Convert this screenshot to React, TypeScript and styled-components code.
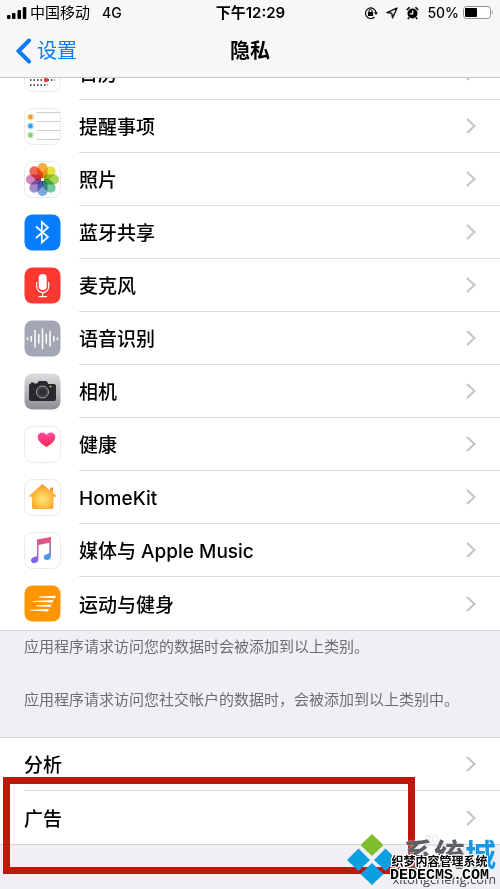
import React from "react";
import styled, { createGlobalStyle } from "styled-components";

const GlobalStyle = createGlobalStyle`
  * { box-sizing: border-box; }
  html, body, #root { height: 100%; }
  body {
    margin: 0;
    overflow: hidden;
    background: #efeff4;
    color: #000;
    font-family: Inter, "Noto Sans CJK SC", sans-serif;
  }
`;

const Screen = styled.div`
  position: relative;
  height: 100%;
  overflow: hidden;
  display: flex;
  flex-direction: column;
`;

const Header = styled.header`
  flex: none;
  background: #f7f7f7;
  border-bottom: 1px solid #c8c8ca;
`;

const StatusBar = styled.div`
  display: grid;
  grid-template-columns: 1fr auto 1fr;
  align-items: center;
  height: 25px;
  padding: 0 6px 0 7px;
  font-size: 15px;
  line-height: 20px;
`;

const StatusGroup = styled.div<{ $end?: boolean }>`
  display: flex;
  align-items: center;
  justify-content: ${(p) => (p.$end ? "flex-end" : "flex-start")};
  gap: ${(p) => (p.$end ? 8 : 3)}px;
`;

const Network = styled.span`
  margin-left: 9px;
  font-size: 14px;
  font-weight: 500;
`;

const Clock = styled.time`
  font-weight: 600;
`;

const Power = styled.span`
  display: flex;
  align-items: center;
  gap: 4px;
  font-size: 14px;
  font-weight: 500;
`;

const NavBar = styled.nav`
  display: grid;
  grid-template-columns: 1fr auto 1fr;
  align-items: center;
  height: 52px;
  padding: 0 16px;
`;

const BackLink = styled.a`
  display: flex;
  align-items: center;
  gap: 5px;
  color: #087cf8;
  font-size: 20px;
  line-height: 28px;
  text-decoration: none;
`;

const Title = styled.h1`
  margin: 0;
  font-size: 20px;
  line-height: 28px;
  font-weight: 700;
`;

const Content = styled.main`
  flex: 1;
  min-height: 0;
  overflow: hidden;
`;

const List = styled.ul<{ $scrolled?: boolean }>`
  list-style: none;
  margin: ${(p) => (p.$scrolled ? "-31px" : "0")} 0 0;
  padding: 0;
  background: #fff;
  border-top: ${(p) => (p.$scrolled ? "none" : "1px solid #d4d4d8")};
  border-bottom: 1px solid #d4d4d8;
`;

const Item = styled.li``;

const Row = styled.a`
  display: flex;
  padding-left: 24px;
  color: inherit;
  text-decoration: none;
`;

const IconSlot = styled.span`
  display: flex;
  align-items: center;
  width: 55px;
`;

const RowBody = styled.span`
  flex: 1;
  display: flex;
  align-items: center;
  justify-content: space-between;
  height: 53px;
  padding-right: 24px;
  border-bottom: 1px solid #dcdce0;
  ${Item}:last-child & {
    border-bottom: none;
  }
`;

const Label = styled.span`
  padding-top: 4px;
  font-size: 19px;
  line-height: 28px;
  font-weight: 500;
`;

const Notes = styled.section`
  padding: 4px 24px 25px;
  color: #6d6d72;
  font-size: 15px;
  line-height: 24px;
`;

const Note = styled.p`
  margin: 0 0 29px;
  white-space: nowrap;
  &:last-child { margin-bottom: 0; }
`;

const Highlight = styled.div`
  position: absolute;
  left: 3px;
  right: 85px;
  top: 777px;
  height: 97px;
  border: 7px solid #be170b;
  pointer-events: none;
`;

const Watermark = styled.div`
  position: absolute;
  right: 4px;
  top: 834px;
  display: flex;
  align-items: flex-start;
  pointer-events: none;
`;

const Brand = styled.div`
  display: grid;
  justify-items: end;
  margin-left: -5px;
`;

const BrandName = styled.span`
  grid-area: 1 / 1;
  padding-top: 2px;
  color: #5c5f63;
  font-size: 31px;
  line-height: 38px;
  font-weight: 700;
  text-shadow: 0 0 2px #fff;
`;

const BrandAccent = styled.span`
  color: #1597e5;
`;

const BrandUrl = styled.span`
  grid-area: 1 / 1;
  padding-top: 35px;
  color: #484848;
  font-family: "Open Sans", sans-serif;
  font-size: 13px;
  line-height: 20px;
  font-weight: 500;
`;

const Paw = styled.svg`
  position: absolute;
  right: 56px;
  top: 834px;
`;

const Stamp = styled.div`
  position: absolute;
  right: 11px;
  top: 855px;
  display: grid;
  justify-items: center;
  color: #000;
  font-weight: 700;
  text-shadow: 1px 0 #fff, -1px 0 #fff, 0 1px #fff, 0 -1px #fff, 1px 1px #fff, -1px -1px #fff, 1px -1px #fff, -1px 1px #fff;
  pointer-events: none;
`;

const StampName = styled.span`
  font-size: 12px;
  line-height: 14px;
`;

const StampUrl = styled.span`
  font-family: "Liberation Mono", monospace;
  font-size: 15px;
  line-height: 14px;
`;

function Tile({ fill = "#fff", children }: { fill?: string; children: React.ReactNode }) {
  return (
    <svg width="37" height="37" viewBox="0 0 37 37" aria-hidden="true">
      <defs>
        <linearGradient id="camera-bg" x1="0" y1="0" x2="0" y2="1">
          <stop offset="0" stopColor="#dedee0" />
          <stop offset="1" stopColor="#8c8d91" />
        </linearGradient>
      </defs>
      <rect x=".5" y=".5" width="36" height="36" rx="8" fill={fill} stroke={fill === "#fff" ? "#eaeaec" : "none"} />
      {children}
    </svg>
  );
}

const CalendarIcon = () => (
  <Tile>
    {[15, 20, 25, 30].map((y) => (
      <path key={y} d={`M6 ${y}H${y === 30 ? 24 : 31}`} stroke="#222" strokeWidth="1.3" strokeDasharray="1.5 2" />
    ))}
    <circle cx="22" cy="25" r="2.2" fill="#f2392f" />
  </Tile>
);

const RemindersIcon = () => (
  <Tile>
    {["#f59b23", "#2d9fee", "#7bd365"].map((c, i) => (
      <g key={c}>
        <circle cx="6.5" cy={9 + i * 9} r="3.6" fill={c} opacity=".3" />
        <circle cx="6.5" cy={9 + i * 9} r="2.2" fill={c} />
      </g>
    ))}
    <path d="M12.500 4.500H36M12.500 13.500H36M12.500 22.500H36M12.500 31.500H36" stroke="#cfcfd2" />
  </Tile>
);

const PhotosIcon = () => (
  <Tile>
    {["#f99d1c", "#e2dc1e", "#97cb3f", "#58bd8c", "#6797d8", "#8f78c0", "#cc6fb0", "#f04b3c"].map((c, i) => (
      <rect
        key={c}
        x="13.500"
        y="2"
        width="10"
        height="15.500"
        rx="5"
        fill={c}
        opacity=".85"
        style={{ mixBlendMode: "multiply" }}
        transform={`rotate(${i * 45} 18.500 18.500)`}
      />
    ))}
    <circle cx="18.500" cy="18.500" r="1.500" fill="#fff" />
  </Tile>
);

const BluetoothIcon = () => (
  <Tile fill="#087cff">
    <path d="M12 12.500L24 23L17.800 28.500V8L24 13.500L12 24" fill="none" stroke="#fff" strokeWidth="1.700" />
  </Tile>
);

const MicrophoneIcon = () => (
  <Tile fill="#fc3830">
    <rect x="14.700" y="7" width="8" height="16" rx="4" fill="#fff" />
    <path d="M12.700 15V19.500A6 6 0 0 0 24.700 19.500V15M18.700 25.500V29.500M14.500 29.700H23" fill="none" stroke="#fff" strokeWidth="1.200" />
  </Tile>
);

const SpeechIcon = () => (
  <Tile fill="#a2a7b3">
    <path
      d="M3.500 18V19.500M7.200 16.500V21M11 10.500V27M14.800 14.500V23M18.500 9V28.500M22.300 14.500V23M26 11.500V26M29.800 16.500V21M33.500 18V19.500"
      stroke="#fff"
      strokeWidth="1.500"
      strokeLinecap="round"
    />
  </Tile>
);

const CameraIcon = () => (
  <Tile fill="url(#camera-bg)">
    <path d="M7 10.500V9.500H10V10.500H13L15 8H22.500L24.500 11H30Q32 11 32 13V26Q32 28 30 28H7Q5 28 5 26V12.500Q5 10.500 7 10.500Z" fill="#28292c" />
    <circle cx="18.500" cy="19" r="6" fill="#303135" stroke="#aaaaac" strokeWidth="1" />
    <circle cx="18.500" cy="19" r="4.200" fill="none" stroke="#54555a" strokeWidth=".8" />
    <circle cx="26.500" cy="13.500" r="1" fill="#e6b629" />
  </Tile>
);

const HealthIcon = () => (
  <Tile>
    <defs>
      <linearGradient id="heart" x1="0" y1="0" x2="0" y2="1">
        <stop offset="0" stopColor="#ff4fa2" />
        <stop offset="1" stopColor="#fa2350" />
      </linearGradient>
    </defs>
    <path d="M22.500 21C17 17.500 13.700 14.500 13.700 11C13.700 8.200 15.800 6.500 18.200 6.500C20.200 6.500 21.700 7.500 22.500 9C23.300 7.500 24.800 6.500 26.800 6.500C29.200 6.500 31.300 8.200 31.300 11C31.300 14.500 28 17.500 22.500 21Z" fill="url(#heart)" />
  </Tile>
);

const HomeIcon = () => (
  <Tile>
    <defs>
      <radialGradient id="home" cx=".5" cy=".6" r=".6">
        <stop offset="0" stopColor="#ffe67a" />
        <stop offset=".6" stopColor="#fdb83c" />
        <stop offset="1" stopColor="#f38b1e" />
      </radialGradient>
    </defs>
    <path d="M18.500 5L26 11.500V8.500H29V14L32.500 17L31 18L29.500 17.500V28Q29.500 30 27.500 30H10Q8 30 8 28V17.500L6.500 18L5 17Z" fill="url(#home)" />
  </Tile>
);

const MusicIcon = () => (
  <Tile>
    <defs>
      <linearGradient id="music-a" x1="0" y1="0" x2="0" y2="1">
        <stop offset="0" stopColor="#ef4e72" />
        <stop offset=".5" stopColor="#b765bb" />
        <stop offset="1" stopColor="#7566f2" />
      </linearGradient>
      <linearGradient id="music-b" x1="0" y1="0" x2="0" y2="1">
        <stop offset="0" stopColor="#ef5371" />
        <stop offset=".6" stopColor="#8b79d2" />
        <stop offset="1" stopColor="#38a4ee" />
      </linearGradient>
    </defs>
    <path d="M13 7.500L27 5V10.500L14.500 13V26.500Q14.500 31 10 31Q7 31 7 28.200Q7 25.500 11 24.800Q13 24.500 13 23Z" fill="url(#music-a)" />
    <path d="M25.300 7L27 5V23.500Q27 28 22.700 28Q19.700 28 19.700 25.300Q19.700 22.700 23.500 22Q25.300 21.700 25.300 20Z" fill="url(#music-b)" />
  </Tile>
);

const MotionIcon = () => (
  <Tile fill="#ff9500">
    <path d="M15 11.500L32 10.800L31 13.300L15 12.500ZM9 16L29.500 15L28.500 17.500L9 16.800ZM12 20.300L27.500 19.500L26.500 22L12 21.200ZM6 24.800L25 24L24 26.500L6 25.500Z" fill="#fff" />
  </Tile>
);

const Chevron = () => (
  <svg width="10" height="18" viewBox="0 0 10 18" fill="none" stroke="#c4c4c9" strokeWidth="2" aria-hidden="true">
    <path d="M1 2L8.500 9L1 16" />
  </svg>
);

const SignalIcon = () => (
  <svg width="20" height="14" viewBox="0 0 20 14" role="img" aria-label="信号">
    <rect x="0" y="9" width="3.500" height="4" rx="1" />
    <rect x="5" y="7" width="3.500" height="6" rx="1" />
    <rect x="10.500" y="4" width="3.500" height="9" rx="1" />
    <rect x="15.800" y="1" width="3.500" height="12" rx="1" />
  </svg>
);

const LockIcon = () => (
  <svg width="14" height="14" viewBox="0 0 14 14" aria-hidden="true">
    <path d="M10.500 11A5.300 5.300 0 1 1 12 6.500" fill="none" stroke="#000" strokeWidth="1.100" />
    <path d="M10 6.300H14L12 9Z" />
    <rect x="3.900" y="6" width="5.200" height="4" rx=".5" />
    <path d="M5 6.500V5A1.500 1.500 0 0 1 8 5V6.500" fill="none" stroke="#000" />
  </svg>
);

const LocationIcon = () => (
  <svg width="12" height="12" viewBox="0 0 12 12" aria-hidden="true">
    <path d="M1 5.700L11 1L6.500 11L5.800 6.200Z" fill="none" stroke="#000" strokeWidth="1.300" strokeLinejoin="round" />
  </svg>
);

const AlarmIcon = () => (
  <svg width="13" height="14" viewBox="0 0 13 14" aria-hidden="true">
    <circle cx="6.500" cy="7.500" r="5" />
    <path d="M.8 4L3.500 1.300M12.200 4L9.500 1.300M3 11.500L1.800 13M10 11.500L11.200 13" stroke="#000" strokeWidth="1.600" />
    <path d="M6.700 4.500V7.800H3.800" fill="none" stroke="#fff" strokeWidth="1.200" />
  </svg>
);

const BatteryIcon = () => (
  <svg width="31" height="14" viewBox="0 0 31 14" aria-hidden="true">
    <rect x=".5" y=".5" width="27" height="12" rx="3" fill="#fff" stroke="#8f8f91" />
    <rect x="2" y="2" width="12" height="9" rx="1" />
    <path d="M29 4.500Q31 6.500 29 8.500Z" fill="#999" />
  </svg>
);

const BackIcon = () => (
  <svg width="16" height="26" viewBox="0 0 16 26" fill="none" stroke="#087cf8" strokeWidth="4" strokeLinecap="round" aria-hidden="true">
    <path d="M13 2.500L2.500 13L13 23.500" />
  </svg>
);

const BrandMark = () => (
  <svg width="50" height="52" viewBox="0 0 50 52" aria-hidden="true">
    <path d="M25 0L36.500 11L25 22L13.500 11Z" fill="#80bd2c" />
    <path d="M11.500 14.500L23 26L11.500 37L0 26ZM38.500 14.500L50 26L38.500 37L27 26ZM25 29L36.500 40L25 51L13.500 40Z" fill="#08a0df" />
  </svg>
);

const PawMark = () => (
  <Paw width="26" height="26" viewBox="0 0 26 26" fill="#fff" stroke="#e6e6ea" aria-hidden="true">
    <ellipse cx="4" cy="11" rx="2.500" ry="4" />
    <ellipse cx="10" cy="5" rx="2.500" ry="4" />
    <ellipse cx="17" cy="5" rx="2.500" ry="4" />
    <ellipse cx="22.500" cy="12" rx="2.500" ry="4" />
    <path d="M13 11Q16 11 18 15Q22 19 20 22Q18 25 13 23Q8 25 6 22Q4 19 8 15Q10 11 13 11Z" />
  </Paw>
);

const services = [
  { label: "日历", icon: <CalendarIcon /> },
  { label: "提醒事项", icon: <RemindersIcon /> },
  { label: "照片", icon: <PhotosIcon /> },
  { label: "蓝牙共享", icon: <BluetoothIcon /> },
  { label: "麦克风", icon: <MicrophoneIcon /> },
  { label: "语音识别", icon: <SpeechIcon /> },
  { label: "相机", icon: <CameraIcon /> },
  { label: "健康", icon: <HealthIcon /> },
  { label: "HomeKit", icon: <HomeIcon /> },
  { label: "媒体与 Apple Music", icon: <MusicIcon /> },
  { label: "运动与健身", icon: <MotionIcon /> },
];

function SettingRow({ label, icon }: { label: string; icon?: React.ReactNode }) {
  return (
    <Item>
      <Row href="#">
        {icon && <IconSlot>{icon}</IconSlot>}
        <RowBody>
          <Label>{label}</Label>
          <Chevron />
        </RowBody>
      </Row>
    </Item>
  );
}

export default function App() {
  return (
    <Screen lang="zh-CN">
      <GlobalStyle />
      <Header>
        <StatusBar>
          <StatusGroup>
            <SignalIcon />
            <span>中国移动</span>
            <Network>4G</Network>
          </StatusGroup>
          <Clock>下午12:29</Clock>
          <StatusGroup $end>
            <LockIcon />
            <LocationIcon />
            <AlarmIcon />
            <Power>
              <span>50%</span>
              <BatteryIcon />
            </Power>
          </StatusGroup>
        </StatusBar>
        <NavBar>
          <BackLink href="#">
            <BackIcon />
            设置
          </BackLink>
          <Title>隐私</Title>
        </NavBar>
      </Header>
      <Content>
        <List $scrolled>
          {services.map((s) => (
            <SettingRow key={s.label} label={s.label} icon={s.icon} />
          ))}
        </List>
        <Notes>
          <Note>应用程序请求访问您的数据时会被添加到以上类别。</Note>
          <Note>应用程序请求访问您社交帐户的数据时，会被添加到以上类别中。</Note>
        </Notes>
        <List>
          <SettingRow label="分析" />
          <SettingRow label="广告" />
        </List>
      </Content>
      <Highlight />
      <PawMark />
      <Watermark>
        <BrandMark />
        <Brand>
          <BrandName>
            系统<BrandAccent>城</BrandAccent>
          </BrandName>
          <BrandUrl>xitongcheng.com</BrandUrl>
        </Brand>
      </Watermark>
      <Stamp>
        <StampName>织梦内容管理系统</StampName>
        <StampUrl>DEDECMS.COM</StampUrl>
      </Stamp>
    </Screen>
  );
}
